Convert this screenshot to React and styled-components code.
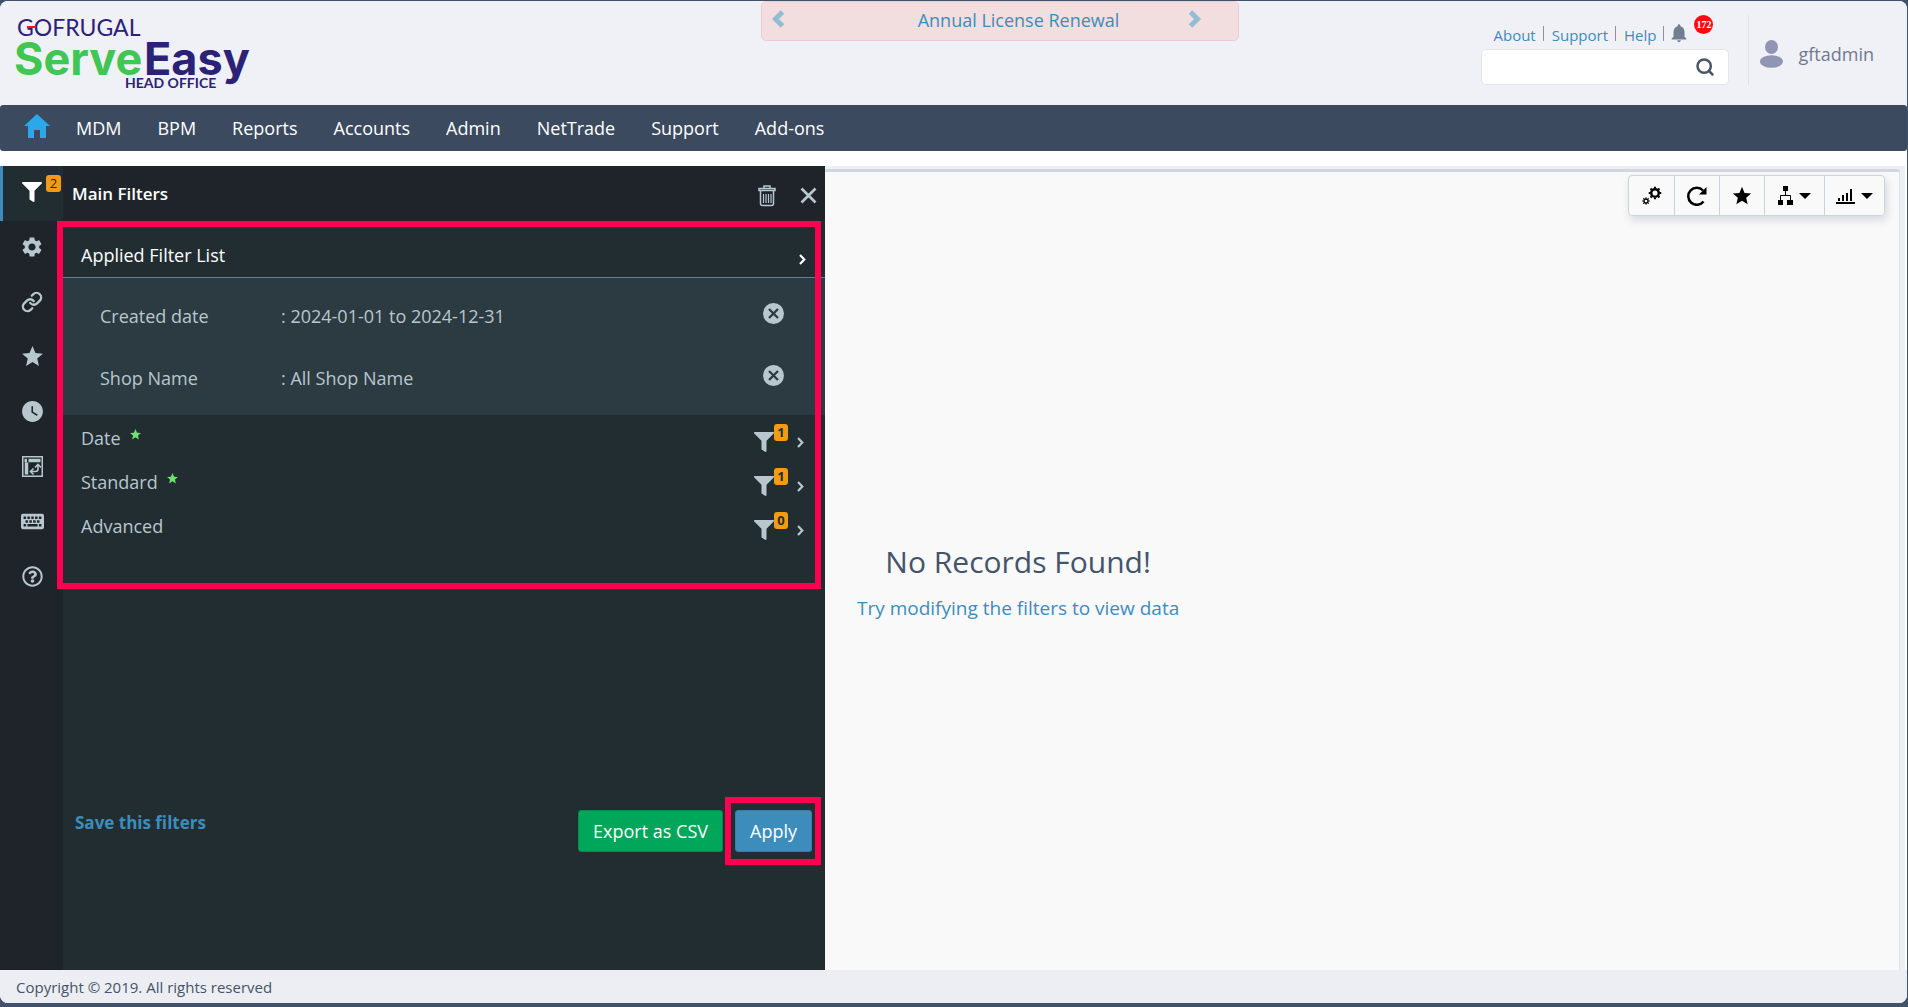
import React from 'react'
import styled, { createGlobalStyle } from 'styled-components'
import { FaFilter, FaKeyboard, FaRegQuestionCircle } from 'react-icons/fa'
import { MdSettings, MdStar, MdWatchLater, MdNotifications } from 'react-icons/md'
import { LuLink, LuSearch } from 'react-icons/lu'

const GlobalStyle = createGlobalStyle`
* {
    box-sizing: border-box;
}
body {
    margin: 0;
    background: #42526a;
    font-family: "Open Sans", "Noto Sans", sans-serif;
    font-size: 18px;
    line-height: 24px;
    color: #b8c7ce;
}
button, input {
    font: inherit;
    color: inherit;
}
button {
    display: inline-flex;
    align-items: center;
    justify-content: center;
    background: transparent;
    border: 0;
    padding: 0;
    cursor: pointer;
}
a {
    color: #3c8dbc;
    text-decoration: none;
}
svg {
    display: block;
}
`

const Shell = styled.div`
display: flex;
flex-direction: column;
min-height: calc(100vh - 5px);
margin: 1px 1px 4px 0;
background: #ffffff;
border-radius: 8px;
overflow: hidden;
`

/* header */
const Header = styled.header`
display: grid;
grid-template-columns: minmax(260px, 761px) minmax(320px, 478px) 1fr;
align-items: start;
height: 104px;
background: #f0f1f7;
`
const LogoLink = styled.a`
padding: 13px 0 0 14px;
`
const Banner = styled.div`
display: flex;
align-items: flex-start;
justify-content: space-between;
height: 40px;
padding: 8px 36px 0 9px;
background: #f2dede;
border: 1px solid #efc9ce;
border-radius: 5px;
`
const BannerButton = styled.button`
color: #92bdd4;
`
const BannerLink = styled.a`
padding-left: 64px;
line-height: 20px;
`
const Account = styled.div`
display: flex;
justify-content: flex-end;
padding: 14px 33px 0 0;
`
const Tools = styled.div`
width: 248px;
margin-right: 19px;
`
const QuickLinks = styled.div`
display: flex;
align-items: center;
height: 34px;
padding: 6px 0 0 12px;
font-size: 15px;
`
const QuickLink = styled.a`
margin-right: 7px;
`
const Separator = styled.span`
width: 1px;
height: 15px;
margin-right: ${props => props.$tight ? '4px' : '8px'};
margin-bottom: 4px;
background: #8890a8;
`
const BellButton = styled.button`
position: relative;
margin-bottom: 5px;
color: #717d91;
`
const AlertCount = styled.span`
position: absolute;
left: 26px;
top: -7px;
width: 19px;
height: 19px;
border-radius: 50%;
background: #ff0a12;
color: #ffffff;
font: bold 10px/19px "Liberation Serif", serif;
text-align: center;
`
const SearchBox = styled.form`
display: flex;
align-items: center;
height: 36px;
padding-right: 13px;
background: #ffffff;
border: 1px solid #e4e5ec;
border-radius: 5px;
color: #4b5563;
`
const SearchInput = styled.input`
flex: 1;
min-width: 0;
height: 100%;
border: 0;
padding: 0 12px;
background: transparent;
outline: none;
`
const UserButton = styled.button`
gap: 15px;
height: 70px;
padding: 8px 0 0 11px;
border-left: 1px solid #e1e3ea;
color: #6f7b8f;
font-weight: 500;
`

/* menu bar */
const MenuBar = styled.nav`
display: flex;
align-items: center;
gap: 36px;
height: 46px;
padding-left: 24px;
background: #3c4a5f;
border-radius: 3px;
`
const HomeLink = styled.a`
margin-right: -10px;
padding-bottom: 5px;
color: #2aa9ea;
`
const MenuLink = styled.a`
color: #ffffff;
`

/* body */
const Body = styled.div`
display: flex;
flex: 1;
margin-top: 15px;
`
const Rail = styled.div`
flex: none;
width: 63px;
background: #1e242a;
`
const RailButton = styled.button`
position: relative;
display: flex;
width: 100%;
height: 55px;
padding: 0 2px 4px 0;
border-left: 3px solid ${props => props.$active ? '#3c8dbc' : 'transparent'};
background: ${props => props.$active ? '#222d32' : 'transparent'};
color: ${props => props.$active ? '#ffffff' : '#b8c7ce'};
`
const Badge = styled.span`
position: absolute;
left: ${props => props.$left};
top: ${props => props.$top};
width: ${props => props.$bold ? '14px' : '15px'};
height: 17px;
border-radius: 3px;
background: #f39c12;
color: #222d32;
font-size: 13px;
font-weight: ${props => props.$bold ? 700 : 400};
line-height: 17px;
text-align: center;
`
const Panel = styled.section`
display: flex;
flex-direction: column;
flex: 0 1 762px;
background: #222d32;
`
const PanelHeader = styled.div`
display: flex;
align-items: center;
gap: 24px;
height: 55px;
padding: 0 8px 0 9px;
background: #1e242a;
`
const PanelTitle = styled.h2`
flex: 1;
margin: 0;
color: #ffffff;
font-size: 17px;
font-weight: 600;
`
const PanelButton = styled.button`
padding-top: 4px;
color: #b8c7ce;
`
const Highlight = styled.div`
position: relative;
&::after {
    content: "";
    position: absolute;
    inset: ${props => props.$inset};
    border: 6px solid #ff0050;
    pointer-events: none;
}
`
const AppliedToggle = styled.button`
display: flex;
justify-content: space-between;
width: 100%;
height: 57px;
padding: 12px 19px 0 18px;
border-bottom: 1px solid #3c8dbc;
color: #ffffff;
& svg {
    margin-top: 8px;
}
`
const AppliedList = styled.dl`
margin: 0;
padding: 7px 41px 6px 37px;
background: #2c3b41;
`
const AppliedRow = styled.div`
display: flex;
align-items: center;
height: 62px;
`
const AppliedName = styled.dt`
width: 181px;
`
const AppliedValue = styled.dd`
display: flex;
flex: 1;
align-items: center;
justify-content: space-between;
margin: 0;
`
const RemoveButton = styled.button`
padding-bottom: 5px;
`
const Groups = styled.div`
padding-bottom: 42px;
`
const GroupButton = styled.button`
display: flex;
justify-content: flex-start;
width: 100%;
height: 44px;
padding: 2px 21px 0 18px;
`
const Required = styled.span`
margin-left: 8px;
padding-bottom: 8px;
color: #6fe36f;
`
const GroupStatus = styled.span`
position: relative;
display: flex;
align-items: center;
gap: 23px;
margin-left: auto;
padding-top: 8px;
`
const Actions = styled.div`
display: flex;
align-items: flex-start;
gap: 12px;
margin-top: auto;
padding: 0 13px 118px 12px;
`
const SaveLink = styled.a`
margin-right: auto;
padding-top: 1px;
font-size: 17px;
font-weight: 700;
`
const ActionButton = styled.button`
height: 42px;
padding: 0 14px;
border: 1px solid ${props => props.$primary ? '#367fa9' : '#008d4c'};
border-radius: 3px;
background: ${props => props.$primary ? '#3c8dbc' : '#00a65a'};
color: #ffffff;
`

const Main = styled.main`
display: flex;
flex: 1;
min-width: 0;
margin-right: 2px;
padding: 3px 5px 0 0;
background: #edeff5;
`
const Report = styled.div`
display: flex;
flex: 1;
flex-direction: column;
align-items: flex-end;
padding: 3px 14px 0 32px;
border-top: 3px solid #d2d6de;
border-right: 1px solid #dfe1e7;
border-radius: 0 3px 0 0;
background: #f9f9f9;
`
const Toolbar = styled.div`
display: flex;
border: 1px solid #ced2da;
border-radius: 4px;
box-shadow: 2px 4px 8px rgba(60, 70, 110, 0.18);
`
const ToolButton = styled.button`
gap: 6px;
width: ${props => props.$wide ? '60px' : '45px'};
height: 39px;
color: #000000;
& + & {
    border-left: 1px solid #ced2da;
}
`
const Empty = styled.div`
align-self: flex-start;
margin-top: 325px;
text-align: center;
`
const EmptyTitle = styled.h1`
margin: 0 0 13px;
color: #44546a;
font-size: 30px;
font-weight: 400;
line-height: 42px;
`
const EmptyHint = styled.a`
font-size: 19px;
`

const Footer = styled.footer`
height: 33px;
padding-left: 16px;
background: #edeef3;
color: #44546a;
font-size: 15px;
line-height: 34px;
`

const Logo = () => (
    <svg width="240" height="80" viewBox="0 0 240 80" role="img" aria-label="GoFrugal ServeEasy Head Office">
        <text x="3" y="22" fontFamily="Lato" fontSize="23" fill="#2b2278">GOFRUGAL</text>
        <rect x="13" y="12" width="9" height="2" fill="#ff1020" />
        <text x="0" y="61" fontFamily="Inter" fontWeight="700" fontSize="45" fill="#41c553">Serve</text>
        <text x="130" y="61" fontFamily="Inter" fontWeight="700" fontSize="45" fill="#2b2278">Easy</text>
        <text x="111" y="74" fontFamily="Lato" fontWeight="700" fontSize="14" fill="#2b2278">HEAD OFFICE</text>
    </svg>
)

const HomeIcon = () => (
    <svg width="26" height="24" viewBox="0 0 26 24" fill="currentColor">
        <path d="M13 0 26 12h-4v12h-6v-8h-6v8H4V12H0z" />
    </svg>
)

const BannerArrow = ({ flip }) => (
    <svg width="14" height="18" viewBox="0 0 14 18" fill="none" stroke="currentColor" strokeWidth="5">
        <path d={flip ? 'M2.500 2l7 7-7 7' : 'M11.500 2l-7 7 7 7'} />
    </svg>
)

const UserIcon = () => (
    <svg width="23" height="28" viewBox="0 0 23 28" fill="#9095b3">
        <ellipse cx="11.500" cy="7" rx="6.500" ry="7" />
        <ellipse cx="11.500" cy="21.500" rx="11.500" ry="6.300" />
    </svg>
)

const PivotIcon = () => (
    <svg width="21" height="21" viewBox="0 0 21 21" fill="none" stroke="currentColor">
        <rect x="0.750" y="0.750" width="19.500" height="19.500" strokeWidth="1.500" />
        <path d="M2.500 4.500h2.500M6.500 4.500h12M4.500 6.500v12" strokeWidth="3.500" />
        <path d="M9 15.500h4.500q2.500 0 2.500-2.500V9.500" strokeWidth="1.600" />
        <path d="m13 11.500 3-3 3 3M11.500 12.500l-3 3 3 3" strokeWidth="1.600" />
    </svg>
)

const TrashIcon = () => (
    <svg width="18" height="22" viewBox="0 0 18 22" fill="none" stroke="currentColor" strokeWidth="1.500">
        <path d="M6 3V1h6v2M1 3.500h16v2H1zM2.500 6v12.500q0 2 2 2h9q2 0 2-2V6" />
        <path d="M5.500 9v9M8 9v9M10.500 9v9M13 9v9" strokeWidth="1.200" />
    </svg>
)

const CloseIcon = () => (
    <svg width="17" height="17" viewBox="0 0 17 17" stroke="currentColor" strokeWidth="2.700">
        <path d="m1.500 1.500 14 14M15.500 1.500l-14 14" />
    </svg>
)

const ChevronIcon = () => (
    <svg width="7" height="11" viewBox="0 0 7 11" fill="none" stroke="currentColor" strokeWidth="2.200">
        <path d="m1 1 4.300 4.500L1 10" />
    </svg>
)

const RemoveIcon = () => (
    <svg width="21" height="21" viewBox="0 0 21 21">
        <circle cx="10.500" cy="10.500" r="10.500" fill="#b8c7ce" />
        <path d="m6 6 9 9M15 6l-9 9" stroke="#2c3b41" strokeWidth="2.300" />
    </svg>
)

const cogTeeth = [0, 45, 90, 135, 180, 225, 270, 315]

const Cog = ({ x, y, r, width }) => (
    <g transform={`translate(${x} ${y})`}>
        <circle r={r} fill="none" stroke="#000000" strokeWidth={width} />
        {cogTeeth.map(angle => (
            <path key={angle} d={`M0 ${-r - width / 2 + 0.3}v-1.500`} stroke="#000000" strokeWidth={width * 0.85} transform={`rotate(${angle})`} />
        ))}
    </g>
)

const CogsIcon = () => (
    <svg width="20" height="20" viewBox="0 0 20 20">
        <Cog x={13} y={7} r={3.8} width={2.5} />
        <Cog x={4} y={15} r={2} width={1.3} />
    </svg>
)

const RefreshIcon = () => (
    <svg width="20" height="20" viewBox="0 0 20 20" fill="none" stroke="currentColor" strokeWidth="2.500">
        <path d="M16.500 15.500A8.500 8.500 0 1 1 16 4.500" />
        <path d="M19.500 1v7.500H12z" fill="currentColor" stroke="none" />
    </svg>
)

const SitemapIcon = () => (
    <svg width="15" height="19" viewBox="0 0 15 19" fill="currentColor">
        <path d="M5 0h5v5H5zM0 14h5v5H0zM9 14h6v5H9z" />
        <path d="M7.500 5v4M2.500 14V9.500h10V14" fill="none" stroke="currentColor" />
    </svg>
)

const ChartIcon = () => (
    <svg width="19" height="16" viewBox="0 0 19 16" fill="currentColor">
        <path d="M0 14h19v2H0zM2 10h2v3H2zM6 7h2v6H6zM10 5h2v8h-2zM14 1h2v12h-2z" />
    </svg>
)

const CaretIcon = () => (
    <svg width="12" height="6" viewBox="0 0 12 6" fill="currentColor">
        <path d="M0 0h12L6 6z" />
    </svg>
)

const menu = ['MDM', 'BPM', 'Reports', 'Accounts', 'Admin', 'NetTrade', 'Support', 'Add-ons']

const railItems = [
    { name: 'Main filters', icon: <FaFilter size={20} />, count: 2 },
    { name: 'Settings', icon: <MdSettings size={24} /> },
    { name: 'Links', icon: <LuLink size={22} strokeWidth={2.5} /> },
    { name: 'Favourites', icon: <MdStar size={25} /> },
    { name: 'History', icon: <MdWatchLater size={25} /> },
    { name: 'Pivot', icon: <PivotIcon /> },
    { name: 'Shortcuts', icon: <FaKeyboard size={23} /> },
    { name: 'Help', icon: <FaRegQuestionCircle size={21} /> },
]

const applied = [
    { name: 'Created date', value: ': 2024-01-01 to 2024-12-31' },
    { name: 'Shop Name', value: ': All Shop Name' },
]

const groups = [
    { name: 'Date', required: true, count: 1 },
    { name: 'Standard', required: true, count: 1 },
    { name: 'Advanced', required: false, count: 0 },
]

function TopHeader() {
    return (
        <Header>
            <LogoLink href="#"><Logo /></LogoLink>
            <Banner>
                <BannerButton aria-label="Previous notice"><BannerArrow /></BannerButton>
                <BannerLink href="#">Annual License Renewal</BannerLink>
                <BannerButton aria-label="Next notice"><BannerArrow flip /></BannerButton>
            </Banner>
            <Account>
                <Tools>
                    <QuickLinks>
                        <QuickLink href="#">About</QuickLink>
                        <Separator />
                        <QuickLink href="#">Support</QuickLink>
                        <Separator />
                        <QuickLink href="#">Help</QuickLink>
                        <Separator $tight />
                        <BellButton aria-label="Notifications">
                            <MdNotifications size={22} />
                            <AlertCount>172</AlertCount>
                        </BellButton>
                    </QuickLinks>
                    <SearchBox role="search">
                        <SearchInput type="text" aria-label="Search" />
                        <button type="button" aria-label="Run search"><LuSearch size={20} strokeWidth={3} /></button>
                    </SearchBox>
                </Tools>
                <UserButton><UserIcon />gftadmin</UserButton>
            </Account>
        </Header>
    )
}

function FilterPanel() {
    return (
        <Panel>
            <PanelHeader>
                <PanelTitle>Main Filters</PanelTitle>
                <PanelButton aria-label="Clear filters"><TrashIcon /></PanelButton>
                <PanelButton aria-label="Close panel"><CloseIcon /></PanelButton>
            </PanelHeader>
            <Highlight $inset="0 4px 0 -6px">
                <AppliedToggle>
                    Applied Filter List
                    <ChevronIcon />
                </AppliedToggle>
                <AppliedList>
                    {applied.map(item => (
                        <AppliedRow key={item.name}>
                            <AppliedName>{item.name}</AppliedName>
                            <AppliedValue>
                                {item.value}
                                <RemoveButton aria-label={`Remove ${item.name}`}><RemoveIcon /></RemoveButton>
                            </AppliedValue>
                        </AppliedRow>
                    ))}
                </AppliedList>
                <Groups>
                    {groups.map(group => (
                        <GroupButton key={group.name}>
                            {group.name}
                            {group.required && <Required><MdStar size={13} /></Required>}
                            <GroupStatus>
                                <FaFilter size={20} />
                                <Badge $bold $left="20px" $top="0">{group.count}</Badge>
                                <ChevronIcon />
                            </GroupStatus>
                        </GroupButton>
                    ))}
                </Groups>
            </Highlight>
            <Actions>
                <SaveLink href="#">Save this filters</SaveLink>
                <ActionButton>Export as CSV</ActionButton>
                <Highlight $inset="-13px -9px -13px -10px">
                    <ActionButton $primary>Apply</ActionButton>
                </Highlight>
            </Actions>
        </Panel>
    )
}

function ReportView() {
    return (
        <Main>
            <Report>
                <Toolbar>
                    <ToolButton aria-label="Settings"><CogsIcon /></ToolButton>
                    <ToolButton aria-label="Refresh"><RefreshIcon /></ToolButton>
                    <ToolButton aria-label="Favourite"><MdStar size={22} /></ToolButton>
                    <ToolButton $wide aria-label="Hierarchy"><SitemapIcon /><CaretIcon /></ToolButton>
                    <ToolButton $wide aria-label="Charts"><ChartIcon /><CaretIcon /></ToolButton>
                </Toolbar>
                <Empty>
                    <EmptyTitle>No Records Found!</EmptyTitle>
                    <EmptyHint href="#">Try modifying the filters to view data</EmptyHint>
                </Empty>
            </Report>
        </Main>
    )
}

function App() {
    return (
        <>
            <GlobalStyle />
            <Shell>
                <TopHeader />
                <MenuBar>
                    <HomeLink href="#" aria-label="Home"><HomeIcon /></HomeLink>
                    {menu.map(name => <MenuLink key={name} href="#">{name}</MenuLink>)}
                </MenuBar>
                <Body>
                    <Rail>
                        {railItems.map(item => (
                            <RailButton key={item.name} aria-label={item.name} $active={Boolean(item.count)}>
                                {item.icon}
                                {item.count && <Badge $left="43px" $top="9px">{item.count}</Badge>}
                            </RailButton>
                        ))}
                    </Rail>
                    <FilterPanel />
                    <ReportView />
                </Body>
                <Footer>Copyright © 2019. All rights reserved</Footer>
            </Shell>
        </>
    )
}

export default App
